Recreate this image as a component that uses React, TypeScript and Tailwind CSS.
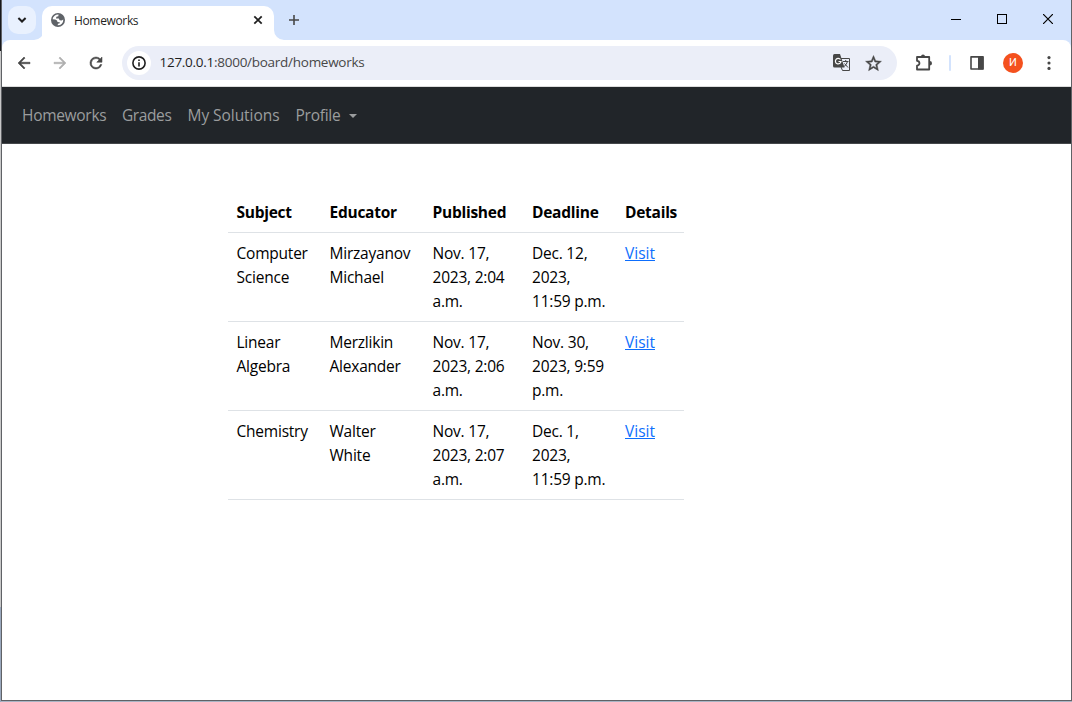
import { ReactNode } from "react";

type Row = { subject: string[]; educator: string[]; published: string[]; deadline: string[] };

const rows: Row[] = [
  { subject: ["Computer", "Science"], educator: ["Mirzayanov", "Michael"], published: ["Nov. 17,", "2023, 2:04", "a.m."], deadline: ["Dec. 12,", "2023,", "11:59 p.m."] },
  { subject: ["Linear", "Algebra"], educator: ["Merzlikin", "Alexander"], published: ["Nov. 17,", "2023, 2:06", "a.m."], deadline: ["Nov. 30,", "2023, 9:59", "p.m."] },
  { subject: ["Chemistry"], educator: ["Walter", "White"], published: ["Nov. 17,", "2023, 2:07", "a.m."], deadline: ["Dec. 1,", "2023,", "11:59 p.m."] },
];

const columns = ["Subject", "Educator", "Published", "Deadline", "Details"];

function Lines({ items }: { items: string[] }) {
  return (
    <div className="flex flex-col">
      {items.map((t) => (
        <span key={t} className="whitespace-nowrap">{t}</span>
      ))}
    </div>
  );
}

function Icon({ size, children, className = "" }: { size: number; children: ReactNode; className?: string }) {
  return (
    <svg width={size} height={size} viewBox="0 0 24 24" fill="currentColor" className={"shrink-0 " + className}>
      {children}
    </svg>
  );
}

function TabStrip() {
  return (
    <div className="flex h-10 bg-[#d3e3fd]">
      <div className="ml-1.5 mt-1.5 flex size-7 items-center justify-center rounded-[10px] bg-[#e9f1fe] text-[#1f1f1f]">
        <svg width="10" height="6" viewBox="0 0 10 6" fill="none" stroke="currentColor" strokeWidth="2"><path d="M1.400 1 5 4.500 8.600 1" /></svg>
      </div>
      <svg width="10" height="10" viewBox="0 0 10 10" className="-ml-0.5 self-end"><path d="M10 0V10H0A10 10 0 0 0 10 0Z" fill="#fff" /></svg>
      <div className="-ml-0.5 mt-1.5 flex h-[34px] w-[232px] items-center rounded-t-[10px] bg-white pb-1.5">
        <svg width="14" height="14" viewBox="0 0 14 14" className="ml-[9px]">
          <circle cx="7" cy="7" r="7" fill="#5f6368" />
          <path d="M7.600 1.500 7.300 3.200 5.400 3.700 5 5.500 7.800 5.600 8.600 7.300 10.600 7.400 12.300 6.500A5.400 5.400 0 0 1 6.600 12.300L7 10.800 8.800 10.300 8.700 9.200 6.500 9 6 7.400 4.200 6.400 1.600 6.300A5.500 5.500 0 0 1 7.600 1.500Z" fill="#fff" />
        </svg>
        <span className="ml-[9px] mt-px flex-1 text-[12px] tracking-[-0.35px] text-[#1f1f1f]">Homeworks</span>
        <svg width="10" height="10" viewBox="0 0 10 10" className="mr-[11px]" stroke="#1f1f1f" strokeWidth="1.800"><path d="M1.300 1.300 8.700 8.700M8.700 1.300 1.300 8.700" /></svg>
      </div>
      <svg width="10" height="10" viewBox="0 0 10 10" className="self-end"><path d="M0 0V10H10A10 10 0 0 1 0 0Z" fill="#fff" /></svg>
      <svg width="10" height="10" viewBox="0 0 10 10" className="ml-[5px] mt-[15px]" stroke="#474747" strokeWidth="1.600"><path d="M5 0V10M0 5H10" /></svg>
      <div className="ml-auto mt-3.5 flex">
        <svg width="10" height="10" viewBox="0 0 10 10" className="mr-9" stroke="#000" shapeRendering="crispEdges"><path d="M0 5.500H10" /></svg>
        <svg width="10" height="10" viewBox="0 0 10 10" className="mr-9" stroke="#000" fill="none" shapeRendering="crispEdges"><path d="M.5 .5H9.500V9.500H.5Z" /></svg>
        <svg width="10" height="10" viewBox="0 0 10 10" className="mr-[18px]" stroke="#000" strokeWidth="1.200"><path d="M0 0 10 10M10 0 0 10" /></svg>
      </div>
    </div>
  );
}

const arrow = "M20 11H7.830l5.590-5.590L12 4l-8 8 8 8 1.410-1.410L7.830 13H20v-2z";

function Toolbar() {
  return (
    <div className="flex h-[47px] bg-[#d3e3fd]">
      <div className="flex flex-1 items-center rounded-t-[8px] border-b border-[#dcdcdc] bg-white text-[#474747]">
        <Icon size={18} className="ml-[13px] stroke-current [stroke-width:0.7]"><path d={arrow} /></Icon>
        <Icon size={18} className="ml-[18px] rotate-180 stroke-current text-[#b0b0b0] [stroke-width:0.7]"><path d={arrow} /></Icon>
        <Icon size={18} className="ml-[18px] stroke-current [stroke-width:0.7]"><path d="M17.650 6.350A7.960 7.960 0 0 0 12 4a8 8 0 1 0 7.730 10h-2.080A6 6 0 1 1 12 6c1.660 0 3.140.690 4.220 1.780L13 11h7V4l-2.350 2.350z" /></Icon>
        <div className="ml-[17px] flex h-[34px] w-[775px] items-center rounded-full bg-[#ebeef8]">
          <div className="ml-[5px] flex size-6 items-center justify-center rounded-full bg-white text-[#1f1f1f]">
            <svg width="14" height="14" viewBox="0 0 14 14" fill="currentColor">
              <circle cx="7" cy="7" r="6.100" fill="none" stroke="currentColor" strokeWidth="1.600" />
              <path d="M6.200 3.500h1.600v1.500H6.200zM6.200 6.200h1.600v4.300H6.200z" />
            </svg>
          </div>
          <span className="-mt-px ml-[8.500px] flex-1 text-[13.500px] tracking-[-0.270px] text-[#474747]"><span className="text-[#1f1f1f]">127.0.0.1</span>:8000/board/homeworks</span>
          <svg width="18" height="18" viewBox="0 0 18 18" className="mr-[13px]">
            <path d="M7 4.500H16.500V16.500H9.500L8 13" fill="none" stroke="#474747" />
            <path d="M1.500 0H7L11.500 13.500H1.500Q0 13.500 0 12V1.500Q0 0 1.500 0Z" fill="#474747" />
            <path d="M7.500 5.500A2.800 2.800 0 1 0 8 7.500H5.500" fill="none" stroke="#fff" strokeWidth="1.200" />
            <path d="M10 7.500H15.500M12.700 6V7.500M14.500 7.500Q13.500 11 11 12.500M11.500 9.500 15 13.500" fill="none" stroke="#474747" />
          </svg>
          <Icon size={19} className="mr-[14px] stroke-current [stroke-width:0.6]"><path d="m22 9.240-7.190-.620L12 2 9.190 8.630 2 9.240l5.460 4.730L5.820 21 12 17.270 18.180 21l-1.630-7.030L22 9.240zM12 15.400l-3.760 2.270 1-4.280-3.320-2.880 4.380-.380L12 6.100l1.710 4.040 4.380.380-3.320 2.880 1 4.280L12 15.400z" /></Icon>
        </div>
        <svg width="18" height="18" viewBox="0 0 18 18" className="ml-[18px]">
          <path d="M2 3H14.200V15.500H2V11.700A2.200 2.200 0 0 0 2 6.800Z" fill="none" stroke="#474747" strokeWidth="1.800" strokeLinejoin="round" />
          <path d="M6 2.500A2 2 0 0 1 10 2.500ZM14.800 7A2.200 2.200 0 0 1 14.800 11.400Z" fill="#474747" />
        </svg>
        <div className="ml-4 h-4 w-0.5 rounded-full bg-[#d3e3fd]" />
        <svg width="16" height="16" viewBox="0 0 16 16" className="ml-[18px]">
          <path d="M2 1.900H14V14H2Z" fill="none" stroke="#474747" strokeWidth="1.600" strokeLinejoin="round" />
          <path d="M9 1.500H14.500V14.500H9Z" fill="#474747" />
        </svg>
        <div className="ml-[18px] flex size-5 items-center justify-center rounded-full bg-[#f4511e] pb-0.5 font-['Roboto',sans-serif] text-[11px] leading-none text-white">И</div>
        <Icon size={20} className="ml-[16px]"><circle cx="12" cy="5.500" r="1.900" /><circle cx="12" cy="12" r="1.900" /><circle cx="12" cy="18.500" r="1.900" /></Icon>
      </div>
    </div>
  );
}

export default function App() {
  return (
    <div className="flex h-[702px] w-[1072px] overflow-hidden bg-[#a9b4c4] font-['Open_Sans','Noto_Sans',sans-serif]">
      <div className="flex w-px flex-col">
        <div className="h-[51px] bg-[#17181c]" />
        <div className="h-[556px] bg-[#c8c8c8]" />
        <div className="flex-1 bg-[#9aa8bd]" />
      </div>
      <div className="flex h-[701px] flex-1 flex-col border-x border-b border-[#606266] bg-white">
        <TabStrip />
        <Toolbar />
        <nav className="flex h-[57px] items-center gap-4 border-b border-[#44474a] bg-[#212529] pl-5 pt-0.5 text-[15.500px] text-[#9b9d9e]">
          <a className="w-[84px] whitespace-nowrap tracking-[-0.300px]">Homeworks</a>
          <a className="w-[49.500px] whitespace-nowrap tracking-[-0.400px]">Grades</a>
          <a className="w-[92px] whitespace-nowrap tracking-[-0.050px]">My Solutions</a>
          <a className="flex items-center gap-[9px] tracking-[-0.250px]">Profile<svg width="8" height="4" viewBox="0 0 8 4"><path d="M0 0H8L4 4Z" fill="currentColor" /></svg></a>
        </nav>
        <main className="pl-[226px] pt-[47px] text-[15.500px] leading-6 text-black">
          <table className="w-[456px] table-fixed border-collapse">
            <colgroup>
              <col className="w-[93px]" />
              <col className="w-[103px]" />
              <col className="w-[99.500px]" />
              <col className="w-[93px]" />
              <col />
            </colgroup>
            <thead>
              <tr className="h-[41px] border-b border-[#dee2e6] text-left">
                {columns.map((c) => <th key={c} className="pb-[7px] pl-[8.500px] pt-[9px] font-bold tracking-[-0.260px]">{c}</th>)}
              </tr>
            </thead>
            <tbody>
              {rows.map((r) => (
                <tr key={r.subject[0]} className="h-[89px] border-b border-[#dee2e6] align-top tracking-[-0.220px]">
                  <td className="py-2 pl-[8.500px]"><Lines items={r.subject} /></td>
                  <td className="py-2 pl-[8.500px]"><Lines items={r.educator} /></td>
                  <td className="py-2 pl-[8.500px]"><Lines items={r.published} /></td>
                  <td className="py-2 pl-[8.500px]"><Lines items={r.deadline} /></td>
                  <td className="py-2 pl-[8.500px] tracking-normal"><a className="text-[#0d6efd] underline">Visit</a></td>
                </tr>
              ))}
            </tbody>
          </table>
        </main>
      </div>
    </div>
  );
}
